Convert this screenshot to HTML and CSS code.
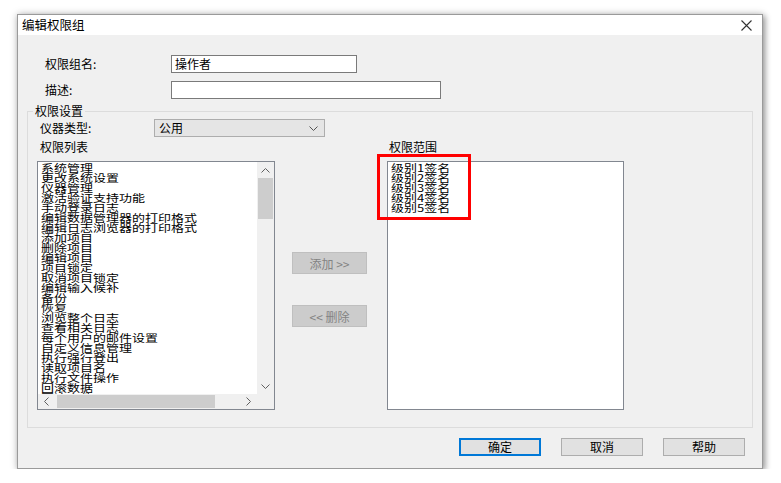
FILE: index.html
```html
<!DOCTYPE html>
<html lang="zh-CN">
<head>
<meta charset="utf-8">
<title>编辑权限组</title>
<link rel="stylesheet" href="styles.css">
</head>
<body>
<div class="window">
  <div class="titlebar">
    <span class="title">编辑权限组</span>
    <svg class="close" width="11" height="11" viewBox="0 0 11 11"><path d="M0.5 0.5L10.5 10.5M10.5 0.5L0.5 10.5" stroke="#333" stroke-width="1.1" fill="none"/></svg>
  </div>
  <div class="content">
    <div class="form-row"><span class="form-label">权限组名:</span><div class="input input-name">操作者</div></div>
    <div class="form-row row2"><span class="form-label">描述:</span><div class="input input-desc"></div></div>
    <fieldset class="group">
      <legend>权限设置</legend>
      <div class="combo-row">
        <span class="combo-label">仪器类型:</span>
        <div class="combo"><span>公用</span><svg width="9" height="5" viewBox="0 0 9 5"><path d="M0.5 0.5L4.5 4.5L8.5 0.5" stroke="#555" fill="none"/></svg></div>
      </div>
      <div class="lists">
        <div class="list-label">权限列表</div>
        <div></div>
        <div class="list-label right">权限范围</div>
        <div class="listbox left-list">
          <div class="list-items">
            <div class="items-inner">
              <div>系统管理</div>
              <div>更改系统设置</div>
              <div>仪器管理</div>
              <div>激活验证支持功能</div>
              <div>手动登录日志</div>
              <div>编辑数据管理器的打印格式</div>
              <div>编辑日志浏览器的打印格式</div>
              <div>添加项目</div>
              <div>删除项目</div>
              <div>编辑项目</div>
              <div>项目锁定</div>
              <div>取消项目锁定</div>
              <div>编辑输入候补</div>
              <div>备份</div>
              <div>恢复</div>
              <div>浏览整个日志</div>
              <div>查看相关日志</div>
              <div>每个用户的邮件设置</div>
              <div>自定义信息管理</div>
              <div>执行强行登出</div>
              <div>读取项目名</div>
              <div>执行文件操作</div>
              <div>回滚数据</div>
              <div>回滚文件</div>
            </div>
          </div>
          <div class="vscroll">
            <div class="arrow"><svg width="9" height="5" viewBox="0 0 9 5"><path d="M0.5 4.5L4.5 0.5L8.5 4.5" stroke="#606060" fill="none"/></svg></div>
            <div class="vthumb"></div>
            <div class="vspace"></div>
            <div class="arrow"><svg width="9" height="5" viewBox="0 0 9 5"><path d="M0.5 0.5L4.5 4.5L8.5 0.5" stroke="#606060" fill="none"/></svg></div>
          </div>
          <div class="hscroll">
            <div class="harrow"><svg width="5" height="9" viewBox="0 0 5 9"><path d="M4.5 0.5L0.5 4.5L4.5 8.5" stroke="#606060" fill="none"/></svg></div>
            <div class="hthumb"></div>
            <div class="hspace"></div>
            <div class="harrow"><svg width="5" height="9" viewBox="0 0 5 9"><path d="M0.5 0.5L4.5 4.5L0.5 8.5" stroke="#606060" fill="none"/></svg></div>
          </div>
          <div class="corner"></div>
        </div>
        <div class="mid-buttons">
          <button class="btn-disabled" disabled>添加 &gt;&gt;</button>
          <button class="btn-disabled" disabled>&lt;&lt; 删除</button>
        </div>
        <div class="listbox right-list">
          <div class="list-items">
            <div class="items-inner">
              <div>级别1签名</div>
              <div>级别2签名</div>
              <div>级别3签名</div>
              <div>级别4签名</div>
              <div>级别5签名</div>
            </div>
          </div>
          <div class="highlight"></div>
        </div>
      </div>
    </fieldset>
    <div class="dialog-buttons">
      <button class="btn btn-default">确定</button>
      <button class="btn">取消</button>
      <button class="btn">帮助</button>
    </div>
  </div>
</div>
</body>
</html>
```

FILE: styles.css
```css
body {
  margin: 0;
  background: #ffffff;
  font-family: "Noto Sans CJK SC", "Noto Sans", sans-serif;
  font-size: 12px;
  color: #000;
}

.window {
  box-sizing: border-box;
  width: 746px;
  height: 455px;
  margin: 14px 0 0 17px;
  border: 1px solid #9a9a9a;
  background: #f0f0f0;
  box-shadow: 2px 2px 6px rgba(0, 0, 0, 0.35), 0 0 8px rgba(0, 0, 0, 0.18);
  display: flex;
  flex-direction: column;
}

.titlebar {
  height: 20px;
  background: #fff;
  display: flex;
  align-items: center;
  justify-content: space-between;
  padding: 0 10px 0 4px;
}

.title {
  font-size: 12.5px;
  line-height: 14px;
}

.content {
  padding-top: 20px;
}

.form-row {
  display: flex;
  align-items: center;
  height: 18px;
  padding-left: 27px;
}

.row2 {
  margin-top: 8px;
}

.form-label {
  width: 126px;
  line-height: 14px;
}

.input {
  box-sizing: border-box;
  height: 18px;
  background: #fff;
  border: 1px solid #7a7a7a;
  padding: 0 3px;
  line-height: 16px;
}

.input-name {
  width: 186px;
}

.input-desc {
  width: 270px;
}

.group {
  margin: 5px 9px 0;
  padding: 1px 0 17px 9px;
  border: 1px solid #dcdcdc;
  min-width: 0;
}

.group legend {
  padding: 0 2px;
  margin-left: -4px;
  line-height: 14px;
  font-size: 12px;
}

.combo-row {
  display: flex;
  align-items: center;
  height: 18px;
}

.combo-label {
  width: 114px;
  padding-left: 3px;
  line-height: 14px;
}

.combo {
  box-sizing: border-box;
  width: 171px;
  height: 18px;
  background: #e5e5e5;
  border: 1px solid #adadad;
  display: flex;
  align-items: center;
  justify-content: space-between;
  padding: 0 6px 0 4px;
  line-height: 16px;
}

.lists {
  display: grid;
  grid-template-columns: 238px 112px 237px;
  grid-template-rows: 24px 249px;
}

.list-label {
  padding: 3px 0 0 3px;
  line-height: 14px;
}

.list-label.right {
  padding-left: 2px;
}

.listbox {
  box-sizing: border-box;
  border: 1px solid #828790;
  background: #fff;
}

.left-list {
  display: grid;
  grid-template-columns: 1fr 17px;
  grid-template-rows: 1fr 15px;
  overflow: hidden;
}

.list-items {
  overflow: hidden;
  padding: 1px 0 0 3px;
  font-size: 13px;
  white-space: nowrap;
  color: #000;
}

.items-inner {
  line-height: 12.5px;
  transform: scaleY(0.8);
  transform-origin: 0 0;
}

.vscroll {
  background: #f0f0f0;
  display: flex;
  flex-direction: column;
}

.arrow {
  height: 16px;
  display: flex;
  align-items: center;
  justify-content: center;
}

.vthumb {
  margin: 0 1px;
  height: 41px;
  background: #cdcdcd;
}

.vspace {
  flex: 1;
}

.hscroll {
  background: #f0f0f0;
  display: flex;
  align-items: center;
}

.harrow {
  width: 17px;
  height: 15px;
  display: flex;
  align-items: center;
  justify-content: center;
}

.hthumb {
  width: 158px;
  height: 13px;
  margin-left: 2px;
  background: #cdcdcd;
}

.hspace {
  flex: 1;
}

.corner {
  background: #f0f0f0;
}

.mid-buttons {
  display: flex;
  flex-direction: column;
  align-items: flex-start;
  padding: 91px 0 0 17px;
  gap: 31px;
}

.btn-disabled {
  box-sizing: border-box;
  width: 75px;
  height: 22px;
  background: #cccccc;
  border: 1px solid #bfbfbf;
  color: #838383;
  font-family: inherit;
  font-size: 12px;
  padding: 0;
}

.right-list {
  position: relative;
}

.highlight {
  position: absolute;
  left: -11px;
  top: -8px;
  width: 94px;
  height: 66px;
  box-sizing: border-box;
  border: 3px solid #ff0000;
}

.dialog-buttons {
  display: flex;
  justify-content: flex-end;
  gap: 20px;
  padding: 10px 17px 0 0;
}

.btn {
  box-sizing: border-box;
  width: 82px;
  height: 18px;
  background: #e1e1e1;
  border: 1px solid #adadad;
  font-family: inherit;
  font-size: 12px;
  line-height: 14px;
  padding: 0;
  color: #000;
}

.btn-default {
  border-color: #0078d7;
  box-shadow: inset 0 0 0 1px #0078d7;
}
```
